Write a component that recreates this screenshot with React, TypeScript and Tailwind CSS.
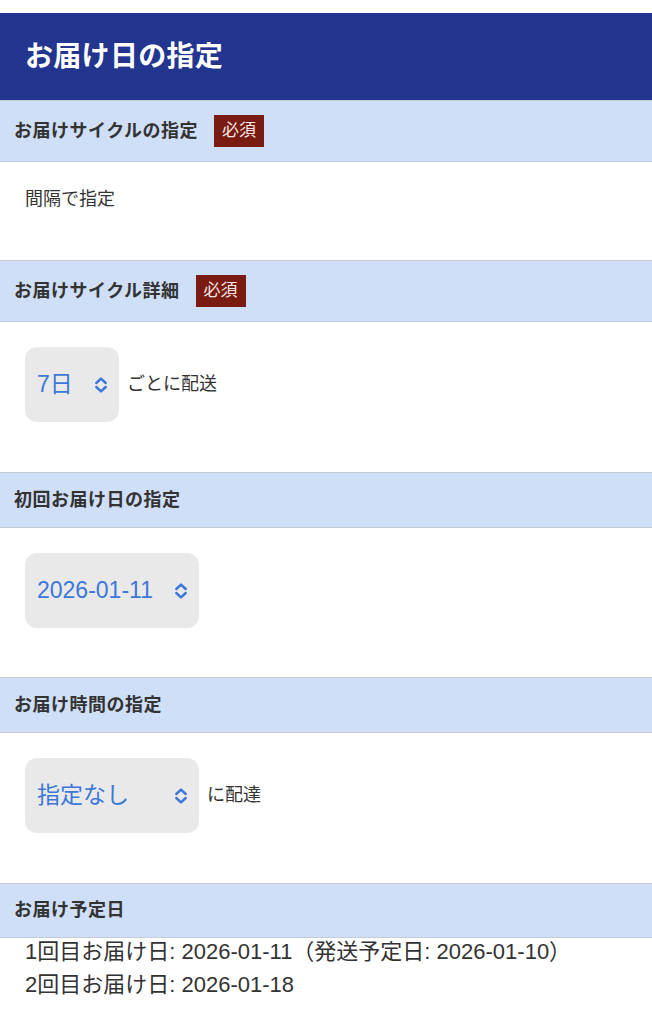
import React from "react";

const font = { fontFamily: '"Liberation Sans", "Noto Sans CJK JP", "Noto Sans", sans-serif' };

function Chevron() {
  return (
    <svg width="14" height="18" viewBox="0 0 14 18" fill="none" className="shrink-0">
      <path d="M2.3 7 L7 2.6 L11.7 7" stroke="#3b78d8" strokeWidth="2.5" strokeLinecap="round" strokeLinejoin="round" />
      <path d="M2.3 11 L7 15.4 L11.7 11" stroke="#3b78d8" strokeWidth="2.5" strokeLinecap="round" strokeLinejoin="round" />
    </svg>
  );
}

function Badge() {
  return (
    <span className="ml-4 inline-flex h-[32px] w-[50px] items-center justify-center bg-[#7a1b12] text-[17px] font-normal text-[#f3e6e4]">
      必須
    </span>
  );
}

function Heading({ title, required, h }: { title: string; required?: boolean; h?: string }) {
  return (
    <div
      className={`flex items-center border-y border-[#c5ccd6] bg-[#cfdff8] pl-[14px] ${
        h ?? (required ? "h-[62px]" : "h-[56px]")
      }`}
    >
      <span className="text-[18px] font-bold tracking-[0.5px] text-[#333333]">{title}</span>
      {required && <Badge />}
    </div>
  );
}

function Select({ label, width }: { label: string; width: string }) {
  return (
    <div className={`flex h-[75px] items-center justify-between rounded-[12px] bg-[#e9e9ea] pl-[12px] pr-[11px] ${width}`}>
      <span className="text-[23px] text-[#3b78d8]">{label}</span>
      <Chevron />
    </div>
  );
}

export default function App() {
  return (
    <div className="min-h-[1024px] w-[652px] bg-white pt-[13px]" style={font}>
      <div className="flex h-[87px] items-center bg-[#22358f] pl-[25px]">
        <h1 className="text-[28px] font-bold tracking-[0.3px] text-white">お届け日の指定</h1>
      </div>

      <Heading title="お届けサイクルの指定" required />
      <div className="px-[25px] pb-[49px] pt-[25px]">
        <p className="text-[18px] leading-[24px] text-[#333333]">間隔で指定</p>
      </div>

      <Heading title="お届けサイクル詳細" required />
      <div className="flex items-center gap-[8px] px-[25px] pb-[50px] pt-[25px]">
        <Select label="7日" width="w-[94px]" />
        <span className="text-[18px] text-[#333333]">ごとに配送</span>
      </div>

      <Heading title="初回お届け日の指定" />
      <div className="flex items-center px-[25px] pb-[49px] pt-[25px]">
        <Select label="2026-01-11" width="w-[174px]" />
      </div>

      <Heading title="お届け時間の指定" />
      <div className="flex items-center gap-[8px] px-[25px] pb-[50px] pt-[25px]">
        <Select label="指定なし" width="w-[174px]" />
        <span className="text-[18px] text-[#333333]">に配達</span>
      </div>

      <Heading title="お届け予定日" h="h-[55px]" />
      <div className="px-[25px] text-[22px] leading-[33px] text-[#333333]">
        <p className="-mt-[3px]">1回目お届け日: 2026-01-11（発送予定日: 2026-01-10）</p>
        <p>2回目お届け日: 2026-01-18</p>
      </div>
    </div>
  );
}
